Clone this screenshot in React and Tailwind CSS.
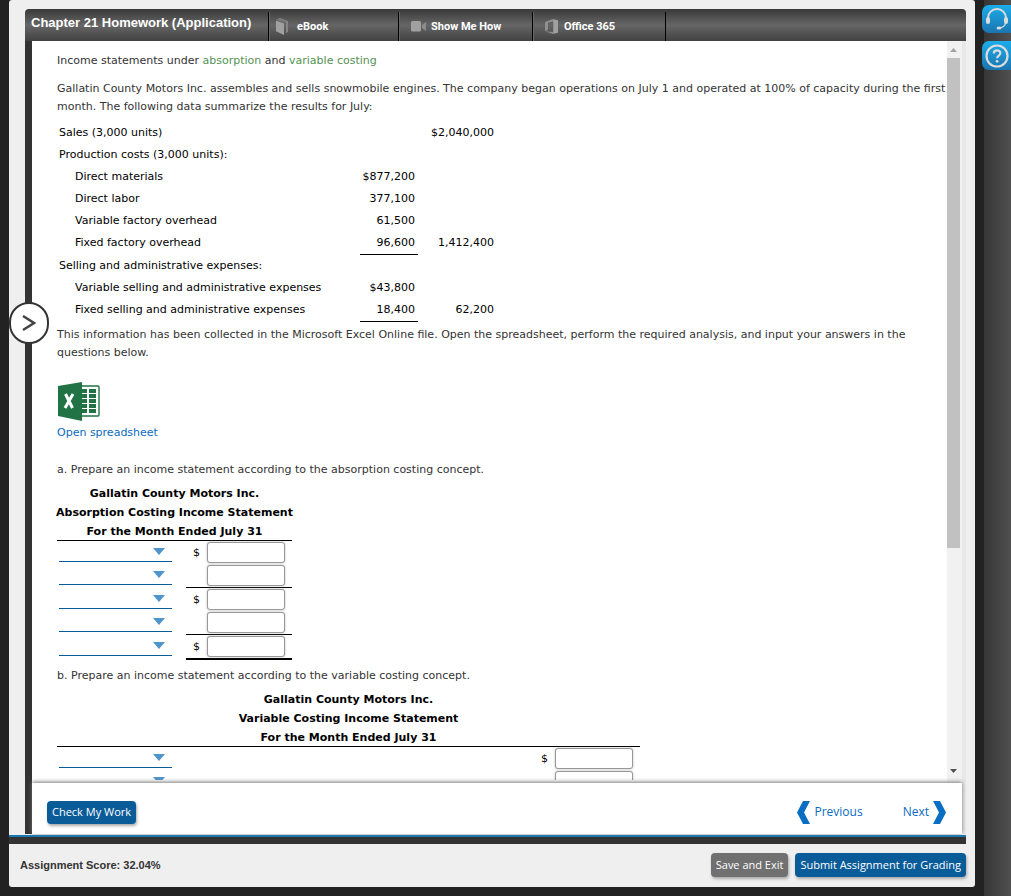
import React, { useState } from "react";

const costRows = [
  { label: "Sales (3,000 units)", total: "$2,040,000" },
  { label: "Production costs (3,000 units):" },
  { label: "Direct materials", indent: true, amount: "$877,200" },
  { label: "Direct labor", indent: true, amount: "377,100" },
  { label: "Variable factory overhead", indent: true, amount: "61,500" },
  {
    label: "Fixed factory overhead",
    indent: true,
    amount: "96,600",
    total: "1,412,400",
    underline: true,
  },
  { label: "Selling and administrative expenses:" },
  {
    label: "Variable selling and administrative expenses",
    indent: true,
    amount: "$43,800",
  },
  {
    label: "Fixed selling and administrative expenses",
    indent: true,
    amount: "18,400",
    total: "62,200",
    underline: true,
  },
];

const absorptionRows = [
  { dollar: true, rule: "" },
  { dollar: false, rule: "border-b border-black" },
  { dollar: true, rule: "" },
  { dollar: false, rule: "border-b border-black" },
  { dollar: true, rule: "border-b-2 border-black" },
];

const variableRows = [
  { dollar: true, rule: "" },
  { dollar: false, rule: "" },
  { dollar: false, rule: "" },
];

const BookIcon = () => (
  <svg width="13" height="17" viewBox="0 0 13 17">
    <path d="M0 2.5 8 5.5V17L0 13.2Z" fill="#a0a0a0" />
    <path d="M0 2 4 0 12 3v11l-2 1V4.6L4 2Z" fill="#858585" />
    <path d="M1 2.2 4.4 .8 11 3.6 9 5Z" fill="#777" />
  </svg>
);

const CameraIcon = () => (
  <svg width="15" height="11" viewBox="0 0 15 11">
    <rect width="10" height="10.5" rx="1.5" fill="#a0a0a0" />
    <path d="M15 1v9l-4-3V4Z" fill="#8c8c8c" />
  </svg>
);

const OfficeIcon = () => (
  <svg width="13" height="15" viewBox="0 0 13 15">
    <path
      d="M0 3 8 0l5 1.5v12L8 15 0 12.2l8 .8V2.5L3 3.8v7L0 12.2Z"
      fill="#8f8f8f"
    />
    <path d="M9 .5 13 1.6v11.8L9 14.6Z" fill="#a0a0a0" />
  </svg>
);

const ExcelIcon = () => (
  <svg width="43" height="40" viewBox="0 0 43 40">
    <rect x="20" y="4" width="22" height="30" rx="1" fill="#fff" stroke="#217346" strokeWidth="1.4" />
    <g fill="#217346">
      {[7, 12, 17, 22, 27].map((y) => (
        <React.Fragment key={y}>
          <rect x="24" y={y} width="6" height="4" />
          <rect x="32" y={y} width="7" height="4" />
        </React.Fragment>
      ))}
    </g>
    <path d="M1 4 25 0v39L1 34Z" fill="#217346" />
    <path d="m8.500 12 7 14M16 12 8 26" stroke="#fff" strokeWidth="3" />
  </svg>
);

const HeadsetIcon = () => (
  <svg width="24" height="24" viewBox="0 0 24 24" fill="none">
    <path d="M3 13V11a9 9 0 0 1 18 0v2" stroke="#dcdcdc" strokeWidth="2" />
    <rect x="1" y="10" width="4" height="7" rx="2" fill="#dcdcdc" />
    <rect x="19" y="10" width="4" height="7" rx="2" fill="#dcdcdc" />
    <path d="M20.500 16c-.5 3-3 4.500-6 4.800" stroke="#dcdcdc" strokeWidth="1.300" />
    <ellipse cx="14" cy="21" rx="2.500" ry="1.500" fill="#dcdcdc" />
  </svg>
);

const HelpIcon = () => (
  <svg width="24" height="24" viewBox="0 0 24 24" fill="none" stroke="#dcdcdc">
    <circle cx="12" cy="12" r="10.500" strokeWidth="2.200" />
    <path d="M8.800 9.500C8.800 5.300 15.500 5.500 15.300 9.300c-.1 2.200-3.200 2.400-3.200 5" strokeWidth="2.200" />
    <circle cx="12.100" cy="17.300" r="1.400" fill="#dcdcdc" stroke="none" />
  </svg>
);

const tools = [
  { name: "eBook", Icon: BookIcon, width: "w-[130px]", spacing: "gap-2 pl-1.5" },
  { name: "Show Me How", Icon: CameraIcon, width: "w-[134px]", spacing: "gap-[5px] pl-[11px]" },
  { name: "Office 365", Icon: OfficeIcon, width: "w-[133px]", spacing: "gap-[6px] pl-[11px]" },
];

const CostTable = () => (
  <table className="mt-[6px] border-separate border-spacing-0 text-black">
    <tbody>
      {costRows.map((row) => (
        <tr key={row.label} className="h-[22px] align-top">
          <td
            className={`w-[303px] py-0 leading-[22px] ${
              row.indent ? "pl-[18px]" : "pl-[2px]"
            }`}
          >
            {row.label}
          </td>
          <td
            className={`w-[58px] pr-[3px] text-right leading-[22px] ${
              row.underline ? "border-b border-black" : ""
            }`}
          >
            {row.amount}
          </td>
          <td className="w-[76px] text-right leading-[22px]">{row.total}</td>
        </tr>
      ))}
    </tbody>
  </table>
);

const Statement = ({ title, rows, className }) => (
  <table
    className={`mt-[5px] border-separate border-spacing-0 text-black ${className}`}
  >
    <thead>
      <tr>
        <th
          colSpan={3}
          className="border-b border-black p-0 text-center font-bold leading-[19px]"
        >
          <div className="-mx-1 -mb-px">
            Gallatin County Motors Inc.
            <br />
            {title}
            <br />
            For the Month Ended July 31
          </div>
        </th>
      </tr>
    </thead>
    <tbody>
      {rows.map((row, i) => (
        <tr key={i}>
          <td className="p-0 pl-[2px] align-top">
            <div className="relative w-[113px]">
              <select
                aria-label={`${title} item ${i + 1}`}
                className="block h-[21px] w-full appearance-none border-b border-[#0a5c99] bg-white outline-none"
              >
                <option></option>
              </select>
              <svg
                className="pointer-events-none absolute right-[7px] top-[7px]"
                width="12"
                height="7"
                viewBox="0 0 12 7"
              >
                <path d="M0 0h12L6 7Z" fill="#4f94cb" />
              </svg>
            </div>
          </td>
          <td className={`w-[21px] p-0 text-center ${row.rule}`}>
            {row.dollar ? "$" : ""}
          </td>
          <td className={`w-[85px] py-px pl-0 pr-[7px] ${row.rule}`}>
            <input
              type="text"
              aria-label={`${title} amount ${i + 1}`}
              className="block h-[21px] w-[78px] rounded-[3px] border border-[#999] bg-white px-1 text-right shadow-[0_0_2px_#aaa] outline-none"
            />
          </td>
        </tr>
      ))}
    </tbody>
  </table>
);

const Chevron = ({ d }) => (
  <svg width="14" height="23" viewBox="0 0 14 23">
    <path d={d} fill="#0a6fc2" />
  </svg>
);

const App = () => {
  const [open, setOpen] = useState(false);

  return (
    <div className="flex h-screen bg-[#222] pl-[9px] font-['DejaVu_Sans',Verdana,sans-serif] text-[11px] text-[#333]">
      <div className="relative mb-[9px] flex min-w-0 flex-1 flex-col rounded-[3px] bg-[#efefef] pt-[9px]">
        {/* Header */}
        <header className="ml-4 mr-[9px] flex h-8 shrink-0 items-end rounded-t-[4px] bg-linear-to-b from-[#393939] via-[#666] to-[#424242] font-bold text-white">
          <h1 className="w-[243px] self-start whitespace-nowrap pl-[6px] pt-1 font-['Liberation_Sans',Arial,sans-serif] text-[13px] leading-5">
            Chapter 21 Homework (Application)
          </h1>
          {tools.map(({ name, Icon, width, spacing }) => (
            <button
              key={name}
              type="button"
              className={`flex h-[29px] border-l border-black font-[Roboto,Arial,sans-serif] ${width}`}
            >
              <span
                className={`flex h-full w-full items-center border-l border-[#666] ${spacing}`}
              >
                <Icon />
                <span className="pt-px">{name}</span>
              </span>
            </button>
          ))}
          <div className="h-[29px] border-l border-black" />
        </header>

        {/* Question area */}
        <div className="ml-4 mr-[9px] flex min-h-0 flex-1 border-l-[7px] border-[#333] bg-linear-to-l from-[#e8e8e8] to-[#c8c8c8] pr-1">
          <div className="flex min-w-0 flex-1 flex-col bg-white">
            <div className="flex min-h-0 flex-1">
              <main className="mb-[3px] min-w-0 flex-1 overflow-hidden pl-[25px] pt-[11px] leading-[18px]">
                <p>
                  Income statements under{" "}
                  <a href="#absorption" className="text-[#539353]">
                    absorption
                  </a>{" "}
                  and{" "}
                  <a href="#variable" className="text-[#539353]">
                    variable costing
                  </a>
                </p>
                <p className="mt-[10px]">
                  Gallatin County Motors Inc. assembles and sells snowmobile
                  engines. The company began operations on July 1 and operated
                  at 100% of capacity during the first month. The following data
                  summarize the results for July:
                </p>
                <CostTable />
                <p className="mt-1 pr-[10px]">
                  This information has been collected in the Microsoft Excel
                  Online file. Open the spreadsheet, perform the required
                  analysis, and input your answers in the questions below.
                </p>
                <a
                  href="#spreadsheet"
                  className="mt-5 inline-block text-[#0a6bc1]"
                >
                  <ExcelIcon />
                  <span className="mt-[2px] block">Open spreadsheet</span>
                </a>
                <p className="mt-[19px]">
                  a. Prepare an income statement according to the absorption
                  costing concept.
                </p>
                <Statement
                  title="Absorption Costing Income Statement"
                  rows={absorptionRows}
                  className="w-[235px]"
                />
                <p className="mt-[7px]">
                  b. Prepare an income statement according to the variable
                  costing concept.
                </p>
                <Statement
                  title="Variable Costing Income Statement"
                  rows={variableRows}
                  className="w-[583px]"
                />
              </main>

              {/* Scroll track */}
              <div className="flex w-[15px] shrink-0 flex-col bg-[#f1f1f1] pr-[2px]">
                <div className="flex h-[17px] items-center justify-center">
                  <svg width="7" height="4" viewBox="0 0 7 4">
                    <path d="M0 4h7L3.500 0Z" fill="#a3a3a3" />
                  </svg>
                </div>
                <div className="flex-1">
                  <div className="h-[70%] bg-[#c1c1c1]" />
                </div>
                <div className="flex h-[25px] items-center justify-center">
                  <svg width="7" height="4" viewBox="0 0 7 4">
                    <path d="M0 0h7L3.500 4Z" fill="#505050" />
                  </svg>
                </div>
              </div>
            </div>

            <div className="relative flex h-[51px] shrink-0 items-center justify-between bg-white pl-[15px] pr-[15px] pt-[7px] font-['Open_Sans',sans-serif] text-[12px] shadow-[0_-1px_4px_#777]">
              <button
                type="button"
                className="h-[23px] rounded-[4px] bg-[#0a5c99] px-[5px] pt-px text-[11px] font-medium text-white shadow-[1px_2px_3px_#aaa]"
              >
                Check My Work
              </button>
              <div className="flex gap-10 text-[#0a6bc1]">
                <a href="#previous" className="flex items-center gap-1">
                  <Chevron d="M7 0h7L8 11.500 14 23H7L1 11.500Z" />
                  Previous
                </a>
                <a href="#next" className="flex items-center gap-1">
                  Next
                  <Chevron d="M7 0H0l6 11.500L0 23h7l6-11.500Z" />
                </a>
              </div>
            </div>
          </div>
        </div>

        <div className="mr-[9px] mt-px h-[9px] shrink-0 border-t-2 border-[#1878b4] bg-[#333]" />

        {/* Score bar */}
        <footer className="flex h-[43px] shrink-0 items-center justify-between pl-[11px] pr-[9px]">
          <span className="font-['Liberation_Sans',Arial,sans-serif] text-[11px] font-bold">
            Assignment Score: 32.04%
          </span>
          <div className="flex gap-[7px] pb-[2px] font-['Open_Sans',sans-serif] text-[11px] font-medium text-white">
            <button
              type="button"
              className="h-6 rounded-[4px] bg-[#707070] px-[5px] pt-px shadow-[1px_2px_3px_#aaa]"
            >
              Save and Exit
            </button>
            <button
              type="button"
              className="h-6 rounded-[4px] bg-[#0a5c99] px-[5px] pt-px shadow-[1px_2px_3px_#aaa]"
            >
              Submit Assignment for Grading
            </button>
          </div>
        </footer>

        {/* Drawer toggle sits over the left rail */}
        <button
          type="button"
          aria-label="Toggle question list"
          aria-expanded={open}
          onClick={() => setOpen(!open)}
          className="absolute left-0 top-[302px] flex h-[42px] w-10 items-center justify-center rounded-full border-2 border-[#333] bg-white"
        >
          <svg width="14" height="17" viewBox="0 0 14 17" fill="none">
            <path d="m1 1 11 7L1 15" stroke="#444" strokeWidth="2.500" />
          </svg>
        </button>
      </div>

      {/* Help rail */}
      <aside className="flex w-9 shrink-0 border-l-[9px] border-[#222] bg-linear-to-r from-[#363636] to-[#505050]">
        <div className="-ml-[2px] flex flex-1 flex-col gap-2 pt-[5px]">
          <button
            type="button"
            aria-label="Support"
            className="flex h-7 w-full items-center rounded-l-[7px] bg-linear-to-b from-[#1badeb] to-[#1a75b0] pl-[3px]"
          >
            <HeadsetIcon />
          </button>
          <button
            type="button"
            aria-label="Help"
            className="flex h-[29px] w-full items-center rounded-l-[7px] bg-linear-to-b from-[#1badeb] to-[#1a75b0] pl-[3px]"
          >
            <HelpIcon />
          </button>
        </div>
      </aside>
    </div>
  );
};

export default App;
